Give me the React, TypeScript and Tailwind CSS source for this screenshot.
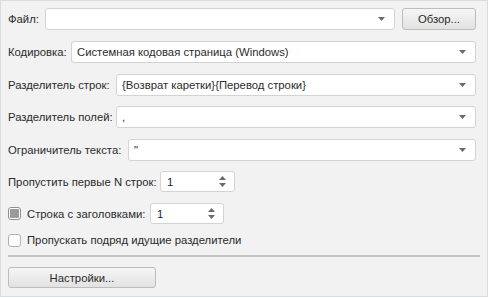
import React from 'react'

function Arrow() {
  return (
    <svg width="7" height="4" viewBox="0 0 7 4" className="shrink-0">
      <path d="M0 0 H7 L3.5 4 Z" fill="#6b6b6b" />
    </svg>
  )
}

function Combo({ value, className }: { value: string; className: string }) {
  return (
    <div
      className={
        'flex items-center shrink-0 h-[22px] bg-white border border-[#d3d3d3] rounded-[3px] pl-[5px] pr-[9px] ' + className
      }
    >
      <span className="flex-1 truncate">{value}</span>
      <Arrow />
    </div>
  )
}

function Spin({ value, className }: { value: string; className: string }) {
  return (
    <div
      className={
        'flex items-center shrink-0 h-[21px] bg-white border border-[#d3d3d3] rounded-[3px] pl-[6px] pr-[8px] ' + className
      }
    >
      <span className="flex-1 text-[#1a1a40]">{value}</span>
      <svg width="7" height="11" viewBox="0 0 7 11">
        <path d="M0 4 L3.5 0 L7 4 Z" fill="#6b6b6b" />
        <path d="M0 7 H7 L3.5 11 Z" fill="#6b6b6b" />
      </svg>
    </div>
  )
}

function App() {
  return (
    <main className="w-[489px] h-[298px] bg-white">
      <div
        className="flex flex-col w-[488px] h-[297px] bg-[#f2f2f2] border border-[#d6dde5] px-[7px] pt-[7px] text-[11.3px] leading-[16px] text-[#2b2b2b] whitespace-nowrap"
        style={{ fontFamily: '"Liberation Sans", Arial, sans-serif' }}
      >
        <div className="flex items-center h-[22px]">
          <span className="w-[37px] shrink-0">Файл:</span>
          <Combo value="" className="w-[350px]" />
          <button className="ml-[7px] shrink-0 w-[74px] h-[22px] rounded-[3px] border border-[#bdbdbd] bg-gradient-to-b from-[#f6f6f6] to-[#e2e2e2] text-[#2b2b2b]">
            Обзор...
          </button>
        </div>

        <div className="flex items-center mt-[11px]">
          <span className="w-[63px] shrink-0">Кодировка:</span>
          <Combo value="Системная кодовая страница (Windows)" className="w-[405px]" />
        </div>

        <div className="flex items-center mt-[11px]">
          <span className="w-[108px] shrink-0">Разделитель строк:</span>
          <Combo value="{Возврат каретки}{Перевод строки}" className="w-[360px]" />
        </div>

        <div className="flex items-center mt-[10px]">
          <span className="w-[108px] shrink-0">Разделитель полей:</span>
          <Combo value="," className="w-[360px]" />
        </div>

        <div className="flex items-center mt-[11px]">
          <span className="w-[120px] shrink-0">Ограничитель текста:</span>
          <Combo value={'"'} className="w-[348px]" />
        </div>

        <div className="flex items-center mt-[10px]">
          <span className="w-[152px] shrink-0">Пропустить первые N строк:</span>
          <Spin value="1" className="w-[75px]" />
        </div>

        <div className="flex items-center mt-[11px]">
          <span className="shrink-0 w-[13px] h-[13px] rounded-[3px] border border-[#8f8f8f] bg-white flex items-center justify-center">
            <span className="w-[9px] h-[9px] rounded-[1px] bg-[#9a9a9a]" />
          </span>
          <span className="ml-[6px] w-[123px] shrink-0">Строка с заголовками:</span>
          <Spin value="1" className="w-[74px]" />
        </div>

        <div className="flex items-center mt-[8px] h-[16px]">
          <span className="shrink-0 w-[13px] h-[13px] rounded-[3px] border border-[#b0b0b0] bg-white" />
          <span className="ml-[6px]">Пропускать подряд идущие разделители</span>
        </div>

        <div className="mt-[7px] w-[472px] h-[2px] bg-[#c4c4c4]" />

        <button className="mt-[10px] w-[148px] h-[21px] rounded-[3px] border border-[#bdbdbd] bg-gradient-to-b from-[#f6f6f6] to-[#e2e2e2] text-[#2b2b2b]">
          Настройки...
        </button>
      </div>
    </main>
  )
}

export default App
